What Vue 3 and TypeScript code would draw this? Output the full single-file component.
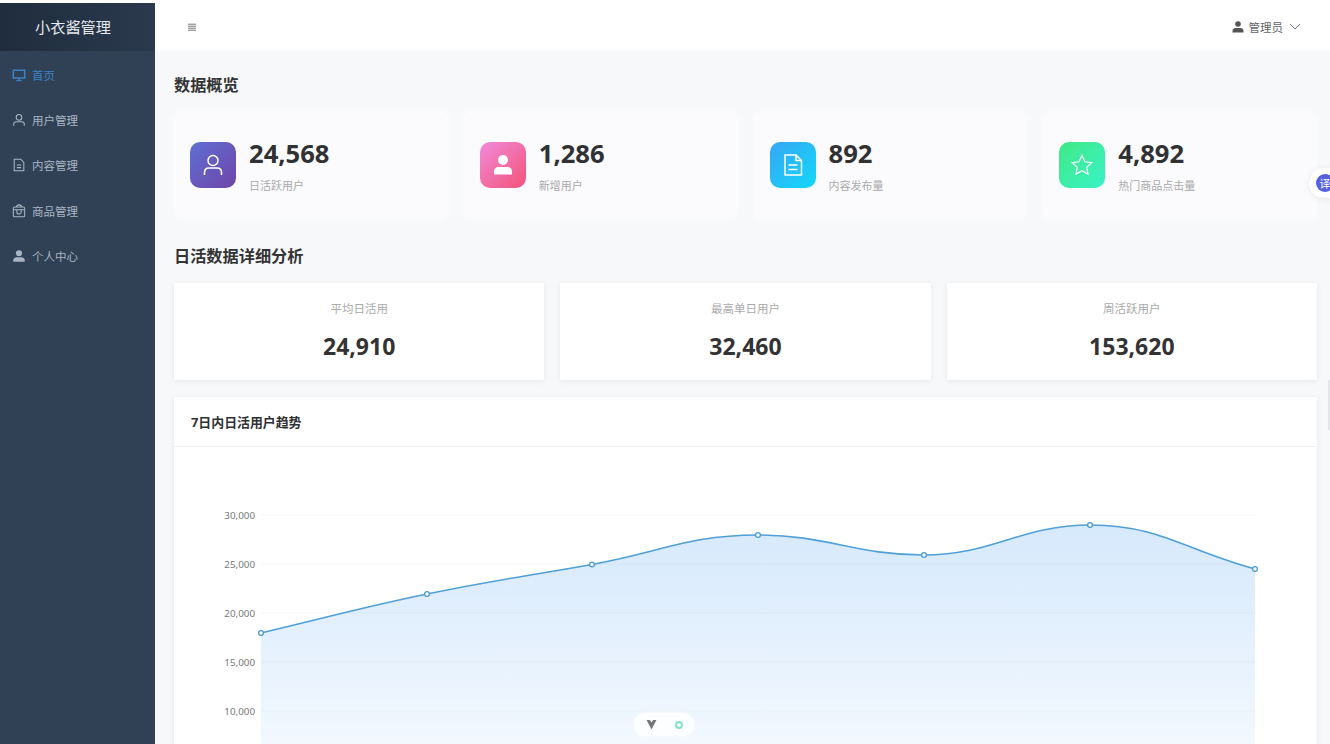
<template>
  <div class="layout">
    <aside class="sidebar">
      <div class="logo">小衣酱管理</div>
      <nav class="menu">
        <div v-for="item in menuItems" :key="item.label" :class="['menu-item', { active: item.active }]">
          <svg class="menu-icon" viewBox="0 0 16 16" fill="none" stroke="currentColor" stroke-width="1.2">
            <template v-if="item.icon === 'monitor'">
              <path d="M1.500 2.500h13v9h-13z" stroke-width="1.800" />
              <path d="M5 14.500h6M8 11.500v3" stroke-width="1.500" />
            </template>
            <template v-else-if="item.icon === 'user'">
              <circle cx="8" cy="5" r="3.200" />
              <path d="M2 14.500v-1.800C2 10.800 3.500 10 5 10h6c1.500 0 3 .8 3 2.700v1.800" />
            </template>
            <template v-else-if="item.icon === 'doc'">
              <path d="M2.500 1.500h7.500l3.500 3.500v9.500h-11z" />
              <path d="M5.500 8h5M5.500 11h5" />
            </template>
            <template v-else-if="item.icon === 'bag'">
              <rect x="1.500" y="3.500" width="13" height="11" rx="1.500" />
              <path d="M1.500 6.500h13M5.500 6.500v2.500a2.500 2.500 0 0 0 5 0V6.500M5 3.500a3 2.500 0 0 1 6 0" />
            </template>
            <template v-else>
              <circle cx="8" cy="4.800" r="3.500" fill="currentColor" stroke="none" />
              <path d="M1.500 14.500v-2C1.500 10.500 3.500 9.500 5.500 9.500h5c2 0 4 1 4 3v2z" fill="currentColor" stroke="none" />
            </template>
          </svg>
          <span>{{ item.label }}</span>
        </div>
      </nav>
    </aside>

    <div class="main">
      <header class="topbar">
        <svg class="fold-icon" viewBox="0 0 12 10" fill="none" stroke="#555" stroke-width="1">
          <path d="M1 1.500h10M1 4h10M1 6.500h10M1 9h10" />
        </svg>
        <div class="user-box">
          <svg class="user-icon" viewBox="0 0 12 12" fill="#555">
            <circle cx="6" cy="3" r="2.800" />
            <path d="M0.500 11.500V10c0-1.800 1.500-3 3-3h5c1.500 0 3 1.200 3 3v1.500z" />
          </svg>
          <span>管理员</span>
          <svg class="chevron" viewBox="0 0 12 7" fill="none" stroke="#777" stroke-width="1">
            <path d="M1 1l5 5 5-5" />
          </svg>
        </div>
      </header>

      <main class="content">
        <h2 class="section-title first">数据概览</h2>
        <div class="stat-grid">
          <div v-for="stat in stats" :key="stat.label" class="stat-card">
            <div class="stat-icon" :class="stat.tone">
              <svg viewBox="0 0 24 24" fill="none" stroke="#fff" stroke-width="1.500">
                <template v-if="stat.tone === 'purple'">
                  <circle cx="12" cy="7.500" r="5" />
                  <path d="M3.500 22v-2.500c0-3 2-4.500 4.500-4.500h8c2.500 0 4.500 1.500 4.500 4.500V22" />
                </template>
                <template v-else-if="stat.tone === 'pink'">
                  <circle cx="12" cy="7" r="5" fill="#fff" stroke="none" />
                  <path d="M3 21.500v-3c0-3 2-4.500 4.500-4.500h9c2.500 0 4.500 1.500 4.500 4.500v3z" fill="#fff" stroke="none" />
                </template>
                <template v-else-if="stat.tone === 'blue'">
                  <path d="M4 2h11l5.500 5.500V22H4z" />
                  <path d="M15 2v5.500h5.500M7.500 12h9M7.500 16.500h9" />
                </template>
                <template v-else>
                  <path d="M12 2.500l2.900 6.300 6.800.8-5 4.700 1.300 6.800-6-3.400-6 3.400 1.300-6.800-5-4.700 6.800-.8z" stroke-width="1.200" />
                </template>
              </svg>
            </div>
            <div class="stat-text">
              <div class="stat-value">{{ stat.value }}</div>
              <div class="stat-label">{{ stat.label }}</div>
            </div>
          </div>
        </div>

        <h2 class="section-title">日活数据详细分析</h2>
        <div class="detail-grid">
          <div v-for="detail in details" :key="detail.label" class="detail-card">
            <div class="detail-label">{{ detail.label }}</div>
            <div class="detail-value">{{ detail.value }}</div>
          </div>
        </div>

        <section class="chart-card">
          <div class="chart-head">7日内日活用户趋势</div>
          <svg class="chart" viewBox="174 447 1142 400" width="1142" height="400">
            <defs>
              <linearGradient id="areaFill" x1="0" y1="0" x2="0" y2="1">
                <stop offset="0" stop-color="#d6e9fc" />
                <stop offset="1" stop-color="#ffffff" />
              </linearGradient>
            </defs>
            <path :d="areaPath" fill="url(#areaFill)" />
            <g v-for="tick in ticks" :key="tick.label">
              <line :x1="chartLeft" :x2="chartRight" :y1="tick.y" :y2="tick.y" stroke="rgba(0, 0, 0, 0.035)" />
              <text class="tick" :x="chartLeft - 6" :y="tick.y + 3.500" text-anchor="end">{{ tick.label }}</text>
            </g>
            <path :d="linePath" fill="none" stroke="#4fa0d8" stroke-width="1.600" />
            <circle v-for="p in points" :key="p.x" :cx="p.x" :cy="p.y" r="2.400" fill="#fff" stroke="#4a9bd0" stroke-width="1.300" />
          </svg>
        </section>
      </main>

      <!-- 浮动插件按钮 -->
      <div class="float-translate"><span>译</span></div>
      <div class="float-tools">
        <svg class="tool-v" viewBox="0 0 10 10"><path d="M0.500 1h3L5 3L6.500 1h3L5 9.500z" fill="#777" /></svg>
        <span class="tool-dot"></span>
      </div>
      <div class="scroll-thumb"></div>
    </div>
  </div>
</template>

<script setup lang="ts">
import { computed } from 'vue';

interface MenuItem {
  label: string;
  icon: string;
  active?: boolean;
}

const menuItems: MenuItem[] = [
  { label: '首页', icon: 'monitor', active: true },
  { label: '用户管理', icon: 'user' },
  { label: '内容管理', icon: 'doc' },
  { label: '商品管理', icon: 'bag' },
  { label: '个人中心', icon: 'person' }
];

const stats = [
  { value: '24,568', label: '日活跃用户', tone: 'purple' },
  { value: '1,286', label: '新增用户', tone: 'pink' },
  { value: '892', label: '内容发布量', tone: 'blue' },
  { value: '4,892', label: '热门商品点击量', tone: 'green' }
];

const details = [
  { value: '24,910', label: '平均日活用' },
  { value: '32,460', label: '最高单日用户' },
  { value: '153,620', label: '周活跃用户' }
];

const chartLeft = 261;
const chartRight = 1255;

const ticks = [
  { label: '30,000', y: 515 },
  { label: '25,000', y: 564 },
  { label: '20,000', y: 613 },
  { label: '15,000', y: 662 },
  { label: '10,000', y: 711 }
];

const points = [
  { x: 261, y: 633 },
  { x: 427, y: 594 },
  { x: 592, y: 564.5 },
  { x: 758, y: 535 },
  { x: 924, y: 555 },
  { x: 1090, y: 525 },
  { x: 1255, y: 569 }
];

// 平滑曲线：极值点切线水平
const linePath = computed(() => {
  const slope = (i: number): number => {
    const prev = points[i - 1];
    const next = points[i + 1];
    if (!prev || !next) return 0;
    if ((points[i].y - prev.y) * (next.y - points[i].y) <= 0) return 0;
    return (next.y - prev.y) / (next.x - prev.x);
  };
  let d = `M${points[0].x} ${points[0].y}`;
  for (let i = 0; i < points.length - 1; i++) {
    const a = points[i];
    const b = points[i + 1];
    const dx = (b.x - a.x) * 0.42;
    const s0 = i === 0 ? (b.y - a.y) / (b.x - a.x) : slope(i);
    const s1 = i === points.length - 2 ? (b.y - a.y) / (b.x - a.x) : slope(i + 1);
    d += ` C${a.x + dx} ${a.y + s0 * dx} ${b.x - dx} ${b.y - s1 * dx} ${b.x} ${b.y}`;
  }
  return d;
});

const areaPath = computed(() => `${linePath.value} L${chartRight} 847 L${chartLeft} 847 Z`);
</script>

<style>
html,
body {
  margin: 0;
  background: #fff;
  overflow: hidden;
}
</style>

<style scoped>
.layout {
  display: flex;
  width: 1330px;
  height: 744px;
  overflow: hidden;
  font-family: "Noto Sans", "Noto Sans CJK SC", sans-serif;
  color: #303133;
}

.sidebar {
  width: 155px;
  flex: none;
  margin-top: 3px;
  background: #304156;
  color: #bfcbd9;
}

.logo {
  height: 48px;
  display: flex;
  align-items: center;
  justify-content: center;
  padding: 0 9px 2px 0;
  box-sizing: border-box;
  font-size: 15.200px;
  color: #e6e9ee;
  background: linear-gradient(90deg, #1f2d3d, #2a394d);
}

.menu {
  padding-top: 1px;
}

.menu-item {
  height: 45.4px;
  display: flex;
  align-items: center;
  gap: 6px;
  padding-left: 12px;
  font-size: 11.500px;
  color: #a9b5c3;
}

.menu-item.active {
  color: #3a82c6;
}

.menu-icon {
  width: 14px;
  height: 14px;
  flex: none;
}

.main {
  position: relative;
  flex: 1;
  min-width: 0;
  display: flex;
  flex-direction: column;
  background: #f7f8fa;
}

.topbar {
  height: 50px;
  flex: none;
  display: flex;
  align-items: center;
  justify-content: space-between;
  padding: 3px 29px 0 32px;
  box-sizing: border-box;
  background: #fff;
}

.fold-icon {
  width: 10px;
  height: 8px;
}

.user-box {
  display: flex;
  align-items: center;
  font-size: 11.500px;
  color: #666;
}

.user-icon {
  width: 12px;
  height: 12px;
  margin-right: 5px;
}

.chevron {
  width: 12px;
  height: 7px;
  margin-left: 6px;
}

.content {
  flex: 1;
  padding: 0 13px 0 19px;
  overflow: hidden;
}

.section-title {
  margin: 0;
  font-size: 16.200px;
  line-height: 22px;
  font-weight: 700;
  color: #333;
}

.section-title.first {
  margin-top: 24px;
}

.stat-grid {
  display: grid;
  grid-template-columns: repeat(4, 1fr);
  gap: 16px;
  margin: 16px 0 27px;
}

.stat-card {
  display: flex;
  align-items: center;
  gap: 13px;
  height: 106px;
  padding: 0 16px;
  background: #fbfbfd;
  border-radius: 6px;
  box-shadow: 0 0 8px #fbfbfd;
}

.stat-icon {
  width: 46px;
  height: 46px;
  flex: none;
  display: flex;
  align-items: center;
  justify-content: center;
  border-radius: 10px;
}

.stat-icon svg {
  width: 24px;
  height: 24px;
}

.stat-icon.purple {
  background: linear-gradient(135deg, #5f6fd4, #6f45a8);
}

.stat-icon.pink {
  background: linear-gradient(135deg, #f08bd8, #f4527a);
}

.stat-icon.blue {
  background: linear-gradient(135deg, #38a6f5, #12d8f8);
}

.stat-icon.green {
  background: linear-gradient(135deg, #40e884, #38f3c8);
}

.stat-text {
  margin-top: 2px;
}

.stat-value {
  font-size: 25.600px;
  line-height: 30px;
  font-weight: 700;
  color: #303133;
}

.stat-label {
  margin-top: 9px;
  font-size: 11px;
  line-height: 16px;
  color: #aaa;
}

.detail-grid {
  display: grid;
  grid-template-columns: repeat(3, 1fr);
  gap: 16px;
  margin: 16px 0 17px;
}

.detail-card {
  height: 97px;
  display: flex;
  flex-direction: column;
  align-items: center;
  background: #fff;
  box-shadow: 0 1px 6px rgba(0, 0, 0, 0.07);
}

.detail-label {
  margin-top: 18px;
  font-size: 11.500px;
  line-height: 16px;
  color: #aaa;
}

.detail-value {
  margin-top: 13px;
  font-size: 23px;
  line-height: 32px;
  font-weight: 700;
  color: #333;
}

.chart-card {
  height: 460px;
  background: #fff;
  box-shadow: 0 1px 6px rgba(0, 0, 0, 0.07);
}

.chart-head {
  height: 49px;
  display: flex;
  align-items: center;
  padding-left: 17px;
  font-size: 12.900px;
  font-weight: 700;
  color: #303133;
  border-bottom: 1px solid #eef0f3;
}

.chart {
  display: block;
}

.tick {
  font-size: 9.800px;
  fill: #777;
}

.float-translate {
  position: absolute;
  top: 168px;
  right: -16px;
  width: 30px;
  height: 30px;
  padding-left: 7px;
  display: flex;
  align-items: center;
  background: #fff;
  border-radius: 15px;
  box-shadow: 0 1px 6px rgba(0, 0, 0, 0.08);
}

.float-translate span {
  width: 18px;
  height: 18px;
  flex: none;
  display: flex;
  align-items: center;
  justify-content: center;
  border-radius: 50%;
  background: #5661e0;
  color: #fff;
  font-size: 11px;
}

.float-tools {
  position: absolute;
  left: 479px;
  top: 713px;
  width: 60px;
  height: 23px;
  display: flex;
  align-items: center;
  justify-content: center;
  gap: 18px;
  background: rgba(255, 255, 255, 0.85);
  border-radius: 12px;
  box-shadow: 0 0 5px rgba(255, 255, 255, 0.8);
}

.tool-v {
  width: 11px;
  height: 11px;
}

.tool-dot {
  width: 4px;
  height: 4px;
  border: 2px solid #7fe3c2;
  border-radius: 50%;
}

.scroll-thumb {
  position: absolute;
  right: 0;
  top: 380px;
  width: 2px;
  height: 50px;
  background: #e3e5e9;
}
</style>
